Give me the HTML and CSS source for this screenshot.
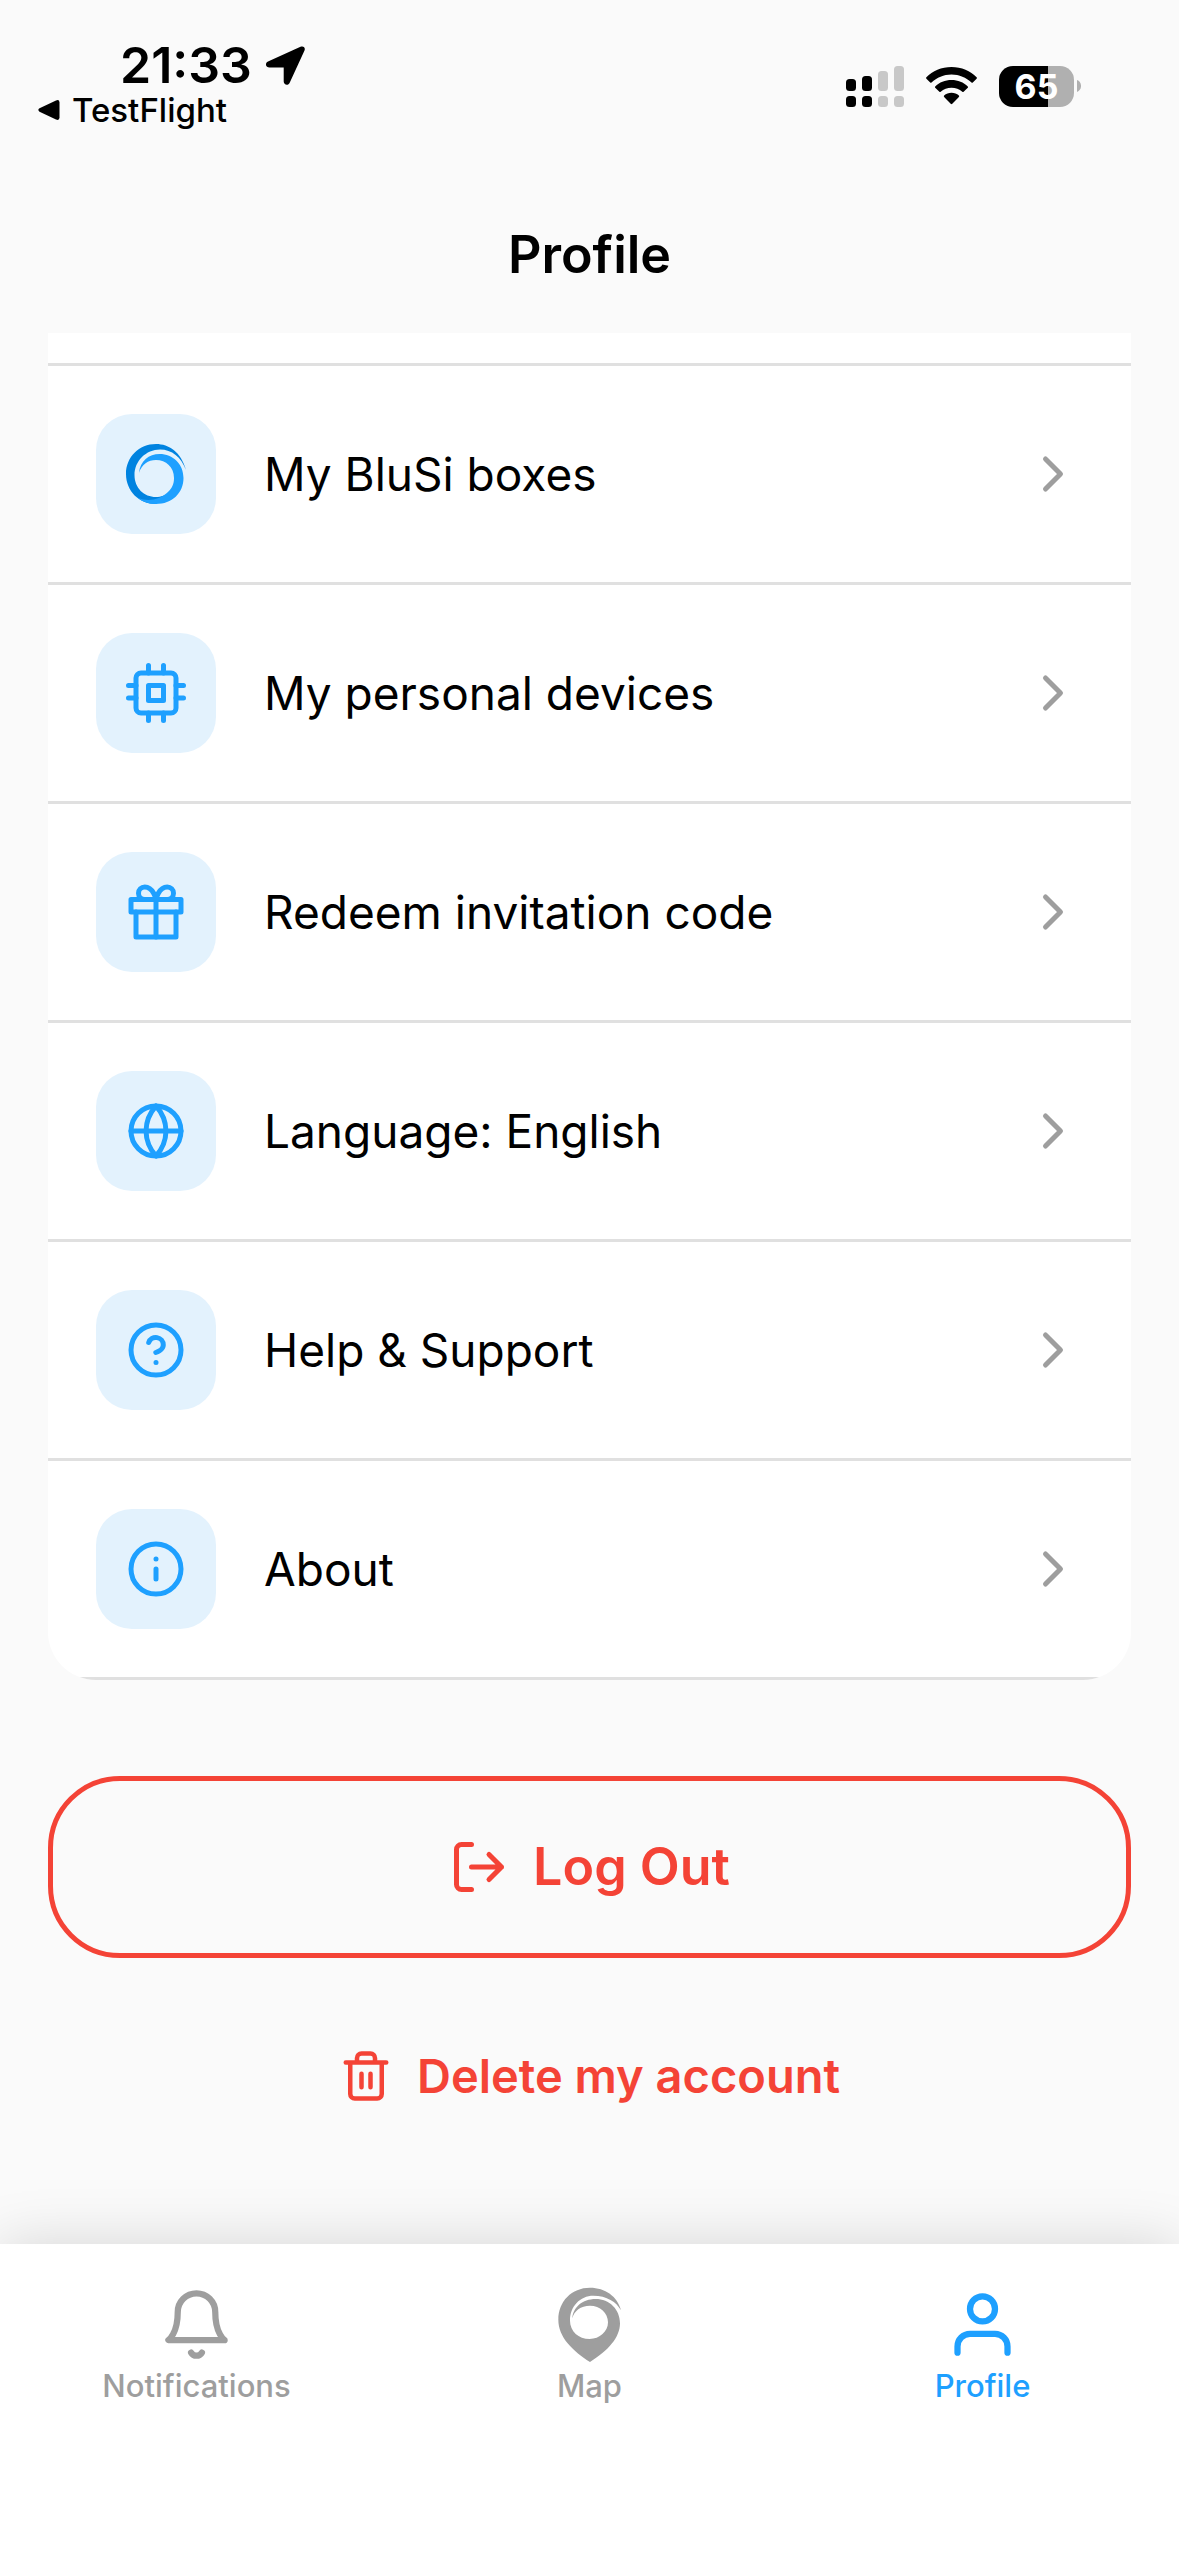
FILE: index.html
```
<!DOCTYPE html>
<html lang="en">
<head>
  <meta charset="UTF-8">
  <meta name="viewport" content="width=device-width, initial-scale=1">
  <title>Profile</title>
  <link rel="stylesheet" href="styles.css">
</head>
<body>

  <header class="header">
    <div class="status-bar">
      <div class="status-left">
        <div class="clock">
          <span>21:33</span>
          <svg width="39" height="39" viewBox="0 0 39 39" aria-hidden="true">
            <path d="M2 15.500L34.500 .8C37.500 -.5 39.600 1.800 38.500 4.600L23.800 36.500C22.500 40 17.700 39.300 17.700 35.600V21.500H3.500C-.6 21.500 -1.200 17 2 15.500Z"/>
          </svg>
        </div>
        <a class="back-link" href="#">
          <svg width="22" height="20" viewBox="0 0 22 20" aria-hidden="true">
            <path d="M1.500 8.300L18 .4Q21.500 -.8 21.500 2.500V17.500Q21.500 20.800 18 19.600L1.500 11.700Q-.8 10 1.500 8.300Z"/>
          </svg>
          TestFlight
        </a>
      </div>

      <div class="status-right">
        <svg width="58" height="41" viewBox="0 0 58 41" aria-hidden="true">
          <rect x="0" y="13" width="10" height="12" rx="3.500"/>
          <rect x="0" y="30" width="10" height="11" rx="3.500"/>
          <rect x="16" y="10" width="10" height="15" rx="3.500"/>
          <rect x="16" y="30" width="10" height="11" rx="3.500"/>
          <g fill="#c8c8c8">
            <rect x="32" y="5" width="10" height="20" rx="3.500"/>
            <rect x="32" y="30" width="10" height="11" rx="3.500"/>
            <rect x="48" y="0" width="10" height="25" rx="3.500"/>
            <rect x="48" y="30" width="10" height="11" rx="3.500"/>
          </g>
        </svg>
        <svg width="51" height="38" viewBox="0 0 51 38" aria-hidden="true">
          <path d="M25.500 0C35.500 0 44.500 4 50.600 10.300Q51.200 11 50.600 11.700L46.800 15.500Q46.200 16 45.500 15.500C40.200 10.500 33.200 7.500 25.500 7.500S10.800 10.500 5.500 15.500Q4.800 16 4.200 15.500L.4 11.700Q-.2 11 .4 10.300C6.500 4 15.500 0 25.500 0Z"/>
          <path d="M25.500 13C31.900 13 37.600 15.400 41.800 19.400Q42.400 20.100 41.800 20.700L37.600 24.800Q37 25.300 36.300 24.800C33.400 22.200 29.600 20.700 25.500 20.700S17.600 22.200 14.700 24.800Q14 25.300 13.400 24.800L9.200 20.700Q8.600 20.100 9.200 19.400C13.400 15.400 19.100 13 25.500 13Z"/>
          <path d="M25.500 25.800C28.300 25.800 30.900 26.800 32.900 28.500Q33.500 29.200 32.900 29.900L26.300 36.800Q25.500 37.500 24.700 36.800L18.100 29.900Q17.500 29.200 18.100 28.500C20.100 26.800 22.700 25.800 25.500 25.800Z"/>
        </svg>
        <div class="battery">
          <span class="battery-level">65</span>
          <svg width="4" height="12" viewBox="0 0 4 12" aria-hidden="true">
            <path d="M0 0C5.400 1.800 5.400 10.200 0 12Z" fill="#b0b0b0"/>
          </svg>
        </div>
      </div>
    </div>

    <h1 class="title">Profile</h1>
  </header>

  <main class="content">
    <ul class="menu">
      <li class="menu-edge"></li>
      <li>
        <a class="menu-item" href="#">
          <span class="menu-icon">
            <svg width="60" height="60" viewBox="0 0 60 60" aria-hidden="true">
              <path fill="#0083e0" d="M60 26C55 8 43 0 30 0C13 0 0 13 0 30C0 47 13 60 30 60L42 48C40 51 35 53 30 53C18 53 8.500 44 8.500 31C8.500 17 20 5.500 34 5.500C46 5.500 55 13 60 26Z"/>
              <path fill="#1ea0ff" d="M13 29C14 17 23 10 33.500 10C47 10 57.500 20 57.500 34C57.500 49 46 60 30 60C23 60 17 58 12 54C22 58 34 56 42 48C46 44 48 40 48 34C48 23 40 16 30 16C22 16 16 20 13 29Z"/>
            </svg>
          </span>
          <span class="menu-label">My BluSi boxes</span>
          <svg class="icon chevron" viewBox="0 0 24 24" aria-hidden="true"><path d="M9 18l6-6-6-6"/></svg>
        </a>
      </li>
      <li>
        <a class="menu-item" href="#">
          <span class="menu-icon">
            <svg class="icon" viewBox="0 0 24 24" aria-hidden="true">
              <rect x="4" y="4" width="16" height="16" rx="2"/>
              <rect x="9" y="9" width="6" height="6"/>
              <path d="M9 1v3M15 1v3M9 20v3M15 20v3M20 9h3M20 14h3M1 9h3M1 14h3"/>
            </svg>
          </span>
          <span class="menu-label">My personal devices</span>
          <svg class="icon chevron" viewBox="0 0 24 24" aria-hidden="true"><path d="M9 18l6-6-6-6"/></svg>
        </a>
      </li>
      <li>
        <a class="menu-item" href="#">
          <span class="menu-icon">
            <svg class="icon" viewBox="0 0 24 24" aria-hidden="true">
              <path d="M20 12v10H4V12"/>
              <rect x="2" y="7" width="20" height="5"/>
              <path d="M12 22V7M12 7H7.500a2.500 2.500 0 0 1 0-5C11 2 12 7 12 7zM12 7h4.500a2.500 2.500 0 0 0 0-5C13 2 12 7 12 7z"/>
            </svg>
          </span>
          <span class="menu-label">Redeem invitation code</span>
          <svg class="icon chevron" viewBox="0 0 24 24" aria-hidden="true"><path d="M9 18l6-6-6-6"/></svg>
        </a>
      </li>
      <li>
        <a class="menu-item" href="#">
          <span class="menu-icon">
            <svg class="icon" viewBox="0 0 24 24" aria-hidden="true">
              <circle cx="12" cy="12" r="10"/>
              <path d="M2 12h20M12 2a15.300 15.300 0 0 1 4 10 15.300 15.300 0 0 1-4 10 15.300 15.300 0 0 1-4-10 15.300 15.300 0 0 1 4-10z"/>
            </svg>
          </span>
          <span class="menu-label">Language: English</span>
          <svg class="icon chevron" viewBox="0 0 24 24" aria-hidden="true"><path d="M9 18l6-6-6-6"/></svg>
        </a>
      </li>
      <li>
        <a class="menu-item" href="#">
          <span class="menu-icon">
            <svg class="icon" viewBox="0 0 24 24" aria-hidden="true">
              <circle cx="12" cy="12" r="10"/>
              <path d="M9.090 9a3 3 0 0 1 5.830 1c0 2-3 3-3 3M12 17h.01"/>
            </svg>
          </span>
          <span class="menu-label">Help &amp; Support</span>
          <svg class="icon chevron" viewBox="0 0 24 24" aria-hidden="true"><path d="M9 18l6-6-6-6"/></svg>
        </a>
      </li>
      <li>
        <a class="menu-item" href="#">
          <span class="menu-icon">
            <svg class="icon" viewBox="0 0 24 24" aria-hidden="true">
              <circle cx="12" cy="12" r="10"/>
              <path d="M12 16v-4M12 8h.01"/>
            </svg>
          </span>
          <span class="menu-label">About</span>
          <svg class="icon chevron" viewBox="0 0 24 24" aria-hidden="true"><path d="M9 18l6-6-6-6"/></svg>
        </a>
      </li>
    </ul>

    <button type="button" class="logout-button">
      <svg class="icon" viewBox="0 0 24 24" aria-hidden="true">
        <path d="M9 21H5a2 2 0 0 1-2-2V5a2 2 0 0 1 2-2h4M16 17l5-5-5-5M21 12H9"/>
      </svg>
      Log Out
    </button>

    <button type="button" class="delete-button">
      <svg class="icon icon-small" viewBox="0 0 24 24" aria-hidden="true">
        <path d="M3 6h18M19 6v14a2 2 0 0 1-2 2H7a2 2 0 0 1-2-2V6M8 6V4a2 2 0 0 1 2-2h4a2 2 0 0 1 2 2v2M10 11v6M14 11v6"/>
      </svg>
      Delete my account
    </button>
  </main>

  <nav class="tab-bar">
    <a class="tab" href="#">
      <svg class="icon icon-large" viewBox="0 0 24 24" aria-hidden="true">
        <path d="M18 8A6 6 0 0 0 6 8c0 7-3 9-3 9h18s-3-2-3-9M13.730 21a2 2 0 0 1-3.460 0"/>
      </svg>
      Notifications
    </a>
    <a class="tab" href="#">
      <svg class="pin" width="75" height="75" viewBox="36 37 225 225" aria-hidden="true">
        <path d="M243 107C233 65 195 39 150 39C95 39 55 80 55 135C55 188 98 228 150 262C205 228 240 188 240 146C240 104 208 73 167 73C127 73 99 98 97 131C102 109 122 93 150 93C180 93 204 114 204 143C204 171 179 193 149 193C116 193 90 170 90 138C90 95 120 63 160 63C200 63 230 82 243 107Z"/>
      </svg>
      Map
    </a>
    <a class="tab active" href="#" aria-current="page">
      <svg class="icon icon-large" viewBox="0 0 24 24" aria-hidden="true">
        <path d="M20 21v-2a4 4 0 0 0-4-4H8a4 4 0 0 0-4 4v2"/>
        <circle cx="12" cy="7" r="4"/>
      </svg>
      Profile
    </a>
  </nav>

</body>
</html>
```
FILE: styles.css
```
* {
    box-sizing: border-box;
}

body {
    display: flex;
    flex-direction: column;
    min-height: 100vh;
    margin: 0;
    background-color: #fafafa;
    color: #000000;
    font-family: Inter, "Liberation Sans", sans-serif;
}

a {
    color: inherit;
    text-decoration: none;
}

svg {
    flex-shrink: 0;
}

/* Status bar */
.status-bar {
    display: flex;
    justify-content: space-between;
    align-items: center;
    padding: 41px 98px 46px 38px;
}

.clock {
    display: flex;
    align-items: center;
    gap: 14px;
    padding-left: 82px;
    font-size: 50px;
    font-weight: 600;
    line-height: 48px;
}

.back-link {
    display: flex;
    align-items: center;
    gap: 12px;
    font-size: 33px;
    font-weight: 500;
    line-height: 42px;
}

.status-right {
    display: flex;
    align-items: center;
    gap: 22px;
}

.battery {
    display: flex;
    align-items: center;
    gap: 3px;
}

.battery-level {
    width: 75px;
    border-radius: 14px;
    background: linear-gradient(to right, #000000 65%, #b0b0b0 65%);
    color: #ffffff;
    font-size: 34px;
    font-weight: 700;
    line-height: 41px;
    text-align: center;
}

.title {
    margin: 0;
    font-size: 52px;
    font-weight: 600;
    line-height: 156px;
    text-align: center;
}

/* Stroked icons */
.icon {
    width: 60px;
    height: 60px;
    fill: none;
    stroke: currentColor;
    stroke-width: 2;
    stroke-linecap: round;
    stroke-linejoin: round;
}

.icon-small {
    width: 54px;
    height: 54px;
}

.icon-large {
    width: 75px;
    height: 75px;
}

.content {
    display: flex;
    flex-direction: column;
    flex: 1;
    padding: 0 48px;
}

/* Menu */
.menu {
    margin: 0 0 96px;
    padding: 0;
    overflow: hidden;
    list-style: none;
    background-color: #ffffff;
    border-radius: 0 0 48px 48px;
}

.menu li {
    border-bottom: 3px solid #e0e0e0;
}

.menu-edge {
    height: 33px;
}

.menu-item {
    display: flex;
    align-items: center;
    gap: 48px;
    padding: 48px;
}

.menu-icon {
    display: flex;
    justify-content: center;
    align-items: center;
    width: 120px;
    height: 120px;
    border-radius: 36px;
    background-color: #e3f2fd;
    color: #1ea0ff;
}

.menu-label {
    flex: 1;
    font-size: 46px;
    line-height: 60px;
}

.chevron {
    color: #9e9e9e;
}

/* Buttons */
.logout-button,
.delete-button {
    display: flex;
    justify-content: center;
    align-items: center;
    gap: 24px;
    background: none;
    border: none;
    color: #f44336;
    font-family: inherit;
    font-weight: 600;
    cursor: pointer;
}

.logout-button {
    padding: 56px;
    border: 5px solid #f44336;
    border-radius: 72px;
    font-size: 52px;
    line-height: 60px;
}

.delete-button {
    align-self: center;
    margin: 70px 0;
    padding: 18px;
    font-size: 47px;
    line-height: 60px;
}

/* Tab bar */
.tab-bar {
    display: grid;
    grid-template-columns: repeat(3, 1fr);
    padding: 43px 0 150px;
    background-color: #ffffff;
    box-shadow: 0 0 54px rgba(0, 0, 0, 0.15);
}

.tab {
    display: flex;
    flex-direction: column;
    align-items: center;
    gap: 4px;
    color: #9e9e9e;
    font-size: 31px;
    font-weight: 500;
    line-height: 40px;
}

.tab.active {
    color: #1ea0ff;
}

.pin {
    fill: currentColor;
}
```
